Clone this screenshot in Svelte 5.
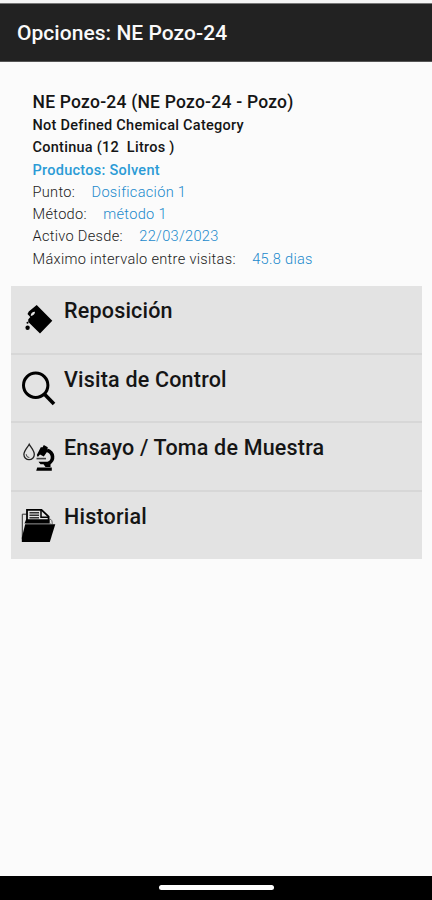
<script>
  const details = [
    { label: 'Punto:', value: 'Dosificación 1' },
    { label: 'Método:', value: 'método 1' },
    { label: 'Activo Desde:', value: '22/03/2023' },
    { label: 'Máximo intervalo entre visitas:', value: '45.8 dias' }
  ];
  const options = [
    { icon: 'refill', text: 'Reposición' },
    { icon: 'search', text: 'Visita de Control' },
    { icon: 'sample', text: 'Ensayo / Toma de Muestra' },
    { icon: 'history', text: 'Historial' }
  ];
</script>

<div class="screen">
  <header><h1>Opciones: NE Pozo-24</h1></header>
  <main>
    <section class="info">
      <h2>NE Pozo-24 (NE Pozo-24 - Pozo)</h2>
      <p class="strong">Not Defined Chemical Category</p>
      <p class="strong">Continua (12&nbsp; Litros )</p>
      <p class="strong products">Productos: Solvent</p>
      {#each details as d}
        <p class="detail"><span>{d.label}</span><span class="value">{d.value}</span></p>
      {/each}
    </section>
    <nav>
      {#each options as o}
        <div class="row">
          <svg viewBox="0 0 40 40" aria-hidden="true">
            {#if o.icon === 'refill'}
              <path d="M17.7 5 33.3 20.7 21 33.4 9.3 22 9.2 19.5 11.3 17 8.5 14 9.8 11.4Z" />
              <path d="M11.8 16C11.5 13.4 13.4 11.7 16 11.8C16.2 13.8 14.2 15.8 11.8 16Z" fill="#e3e3e3" />
              <circle cx="8.6" cy="27.8" r="2.2" /><circle cx="8.5" cy="22.8" r="1" />
            {:else if o.icon === 'search'}
              <circle cx="16.7" cy="16.3" r="12.2" fill="none" stroke="#000" stroke-width="3" />
              <path d="M25.8 25.4 35 35.1" fill="none" stroke="#000" stroke-width="3.6" />
            {:else if o.icon === 'sample'}
              <path d="M10.2 7.2C8.3 10.8 4.9 13.6 4.9 17.5A5.2 5.2 0 0 0 15.3 17.5C15.3 13.6 12.1 10.8 10.2 7.2Z" fill="none" stroke="#222" stroke-width="1.3" />
              <path d="M7.2 17.2Q7.2 20.4 10.4 20.6" fill="none" stroke="#333" stroke-width=".9" />
              <path d="M17.8 18 21.8 10.2 23.6 10.2 24.8 8 28.8 10.2 28.2 12.4 28.6 14 24.8 19.4 21 17.6 18.8 20Z" />
              <path d="M28 13.2C34.8 15.4 35.4 23.4 29.5 26.4" fill="none" stroke="#000" stroke-width="3.6" />
              <path d="M17.5 21.6H27" stroke="#444" stroke-width="1.6" />
              <path d="M19.5 24.8H31.5V30H26.5L24.5 27.2H21.5ZM18.2 30.5H32.8V33.8H17.2Z" />
            {:else}
              <g transform="translate(0 -.8)">
                <path d="M7.3 9H3.3V34" fill="none" stroke="#333" stroke-width="1" />
                <path d="M31 14Q33.4 14.2 33.2 19" fill="none" stroke="#555" stroke-width=".9" />
                <path d="M8 16V4.7H22.5L29.6 11.5V18H8Z" fill="#e3e3e3" stroke="#000" stroke-width="1.8" />
                <path d="M22 4.7V12H29.5" fill="none" stroke="#000" stroke-width="1.5" />
                <path d="M10.5 7.5H20M10.5 10H20M10.5 12.5H20" stroke="#333" stroke-width="1.5" />
                <path d="M7.2 14H30.4V18.2H5.5Z" />
                <path d="M6 18.3H32" stroke="#888" stroke-width=".7" />
                <path d="M6.2 19H36.3L30.8 36.8H2.8V32.5Z" />
              </g>
            {/if}
          </svg>
          <span>{o.text}</span>
        </div>
      {/each}
    </nav>
  </main>
  <footer><i></i></footer>
</div>

<style>
  :global(body) { background: #fbfbfb; }
  .screen { width: 432px; height: 900px; box-sizing: border-box; display: flex; flex-direction: column; background: #fbfbfb; border-top: 3px solid #f5f5f5; font-family: Roboto, sans-serif; color: #151515; overflow: hidden; }
  header { height: 59px; box-sizing: border-box; background: #222; border-top: 1px solid #777; border-bottom: 1px solid #555; padding-left: 17px; display: flex; align-items: center; flex: none; }
  h1 { margin: 0; color: #fafafa; font-size: 21px; line-height: 24px; font-weight: 500; letter-spacing: .04px; white-space: nowrap; }
  main { flex: 1; padding: 28px 10px 0 11px; }
  .info { padding-left: 21.5px; height: 196px; white-space: nowrap; }
  h2 { margin: 0; font-size: 17.5px; line-height: 24px; font-weight: 500; height: 24px; letter-spacing: .22px; }
  p { margin: 0; height: 22.25px; line-height: 22px; font-size: 14.5px; }
  .strong { font-weight: 500; letter-spacing: .27px; line-height: 23.2px; }
  .products { color: #2c9bd6; }
  .detail { display: flex; gap: 16.4px; font-weight: 300; font-size: 14.6px; color: #1a1a1a; letter-spacing: .3px; }
  .value { color: #1c8acc; }
  nav { background: #e3e3e3; }
  .row { height: 68.5px; box-sizing: border-box; display: flex; align-items: flex-start; padding: 14px 0 0 8px; border-bottom: 2px solid #d7d7d7; }
  .row:last-child { height: 67.5px; border-bottom: 0; }
  svg { width: 40px; height: 40px; flex: none; margin-right: 5px; }
  .row span { margin-top: -2px; font-size: 21.5px; line-height: 26px; font-weight: 500; letter-spacing: .2px; white-space: nowrap; }
  footer { height: 24px; flex: none; background: #000; display: flex; justify-content: center; }
  footer i { width: 115px; height: 5px; margin-top: 9px; border-radius: 3px; background: #fff; }
</style>
